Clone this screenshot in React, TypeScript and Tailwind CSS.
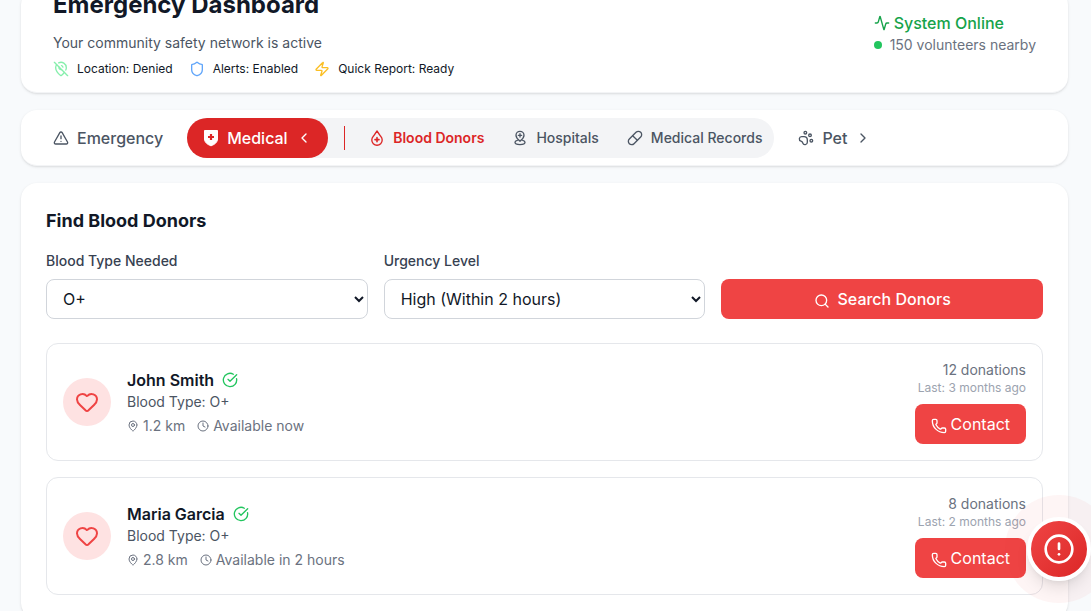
import { Activity, ChevronLeft, ChevronRight, CircleAlert, CircleCheckBig, Clock, Heart, MapPin, MapPinOff, PawPrint, Phone, Pill, Search, Shield, TriangleAlert, Zap } from "lucide-react";

const font = { fontFamily: "Inter, sans-serif" };

function ShieldPlusFilled() {
  return (
    <svg width="16" height="18" viewBox="0 0 16 18" className="shrink-0">
      <path d="M1.500 1.500H14.500V10C14.500 13.300 11.500 15.600 8 16.800C4.500 15.600 1.500 13.300 1.500 10Z" fill="#fff" stroke="#fff" strokeWidth="1" strokeLinejoin="round" />
      <path d="M8 5v6M5 8h6" stroke="#dc2626" strokeWidth="2.200" />
    </svg>
  );
}

function DropPlus() {
  return (
    <svg width="16" height="16" viewBox="0 0 24 24" fill="none" stroke="#dc2626" strokeWidth="2" strokeLinecap="round" strokeLinejoin="round" className="shrink-0">
      <path d="M12 1.500 6.500 9.500a7.800 7.800 0 1 0 11 0z" />
      <path d="M12 11.500v6M9 14.500h6" strokeWidth="2.400" />
    </svg>
  );
}

function HospitalPin() {
  return (
    <svg width="16" height="16" viewBox="0 0 24 24" fill="none" stroke="#4b5563" strokeWidth="2" strokeLinecap="round" strokeLinejoin="round" className="shrink-0">
      <path d="M18 8c0 3.600-3.600 6.800-5.400 8.300a1 1 0 0 1-1.200 0C9.600 14.800 6 11.600 6 8a6 6 0 0 1 12 0" />
      <path d="M12 5.500v5M9.500 8h5" />
      <path d="M8 15.500c-2 .6-3.500 1.600-3.500 3C4.500 20.500 8 22 12 22s7.500-1.500 7.500-3.500c0-1.400-1.500-2.400-3.500-3" />
    </svg>
  );
}

function Donor({ name, km, avail, count, last }: { name: string; km: string; avail: string; count: string; last: string }) {
  return (
    <div className="flex h-[118px] items-center justify-between rounded-xl border border-[#e5e7eb] bg-white px-4">
      <div className="flex items-center gap-4">
        <div className="flex h-12 w-12 items-center justify-center rounded-full bg-[#fee2e2]">
          <Heart size={24} className="text-[#ef4444]" />
        </div>
        <div>
          <div className="flex items-center gap-2">
            <span className="text-base font-semibold leading-6 text-[#111827]">{name}</span>
            <CircleCheckBig size={16} className="text-[#22c55e]" />
          </div>
          <div className="text-sm leading-5 text-[#4b5563]">Blood Type: O+</div>
          <div className="mt-1 flex items-center gap-3 text-sm leading-5 text-[#6b7280]">
            <span className="flex items-center gap-1"><MapPin size={12} />{km}</span>
            <span className="flex items-center gap-1"><Clock size={12} />{avail}</span>
          </div>
        </div>
      </div>
      <div className="text-right">
        <div className="text-sm leading-5 text-[#6b7280]">{count}</div>
        <div className="text-xs leading-4 text-[#9ca3af]">{last}</div>
        <button className="mt-2 inline-flex h-10 items-center gap-1 rounded-lg bg-[#ef4444] px-4 text-base text-white">
          <Phone size={16} className="mt-1" />Contact
        </button>
      </div>
    </div>
  );
}

export default function App() {
  return (
    <div style={font} className="relative h-[611px] w-[1091px] overflow-hidden bg-[#f8fafc] pl-[21px] pr-[23px]">
      <div className="-mt-[11px] flex h-[104px] justify-between rounded-2xl border-b border-[#f3f4f6] bg-white px-8 shadow-sm">
        <div>
          <h1 className="text-2xl font-bold leading-8 text-[#111827]">Emergency Dashboard</h1>
          <p className="mt-[12px] text-sm leading-5 text-[#4b5563]">Your community safety network is active</p>
          <div className="mt-[8px] flex items-center gap-4 text-xs leading-4 text-[#111827]">
            <span className="flex items-center gap-2"><MapPinOff size={16} className="text-[#86efac]" />Location: Denied</span>
            <span className="flex items-center gap-2"><Shield size={16} className="text-[#60a5fa]" />Alerts: Enabled</span>
            <span className="flex items-center gap-2"><Zap size={16} className="text-[#fbbf24]" />Quick Report: Ready</span>
          </div>
        </div>
        <div className="pt-[22px]">
          <div className="flex items-center gap-1 text-base font-medium leading-6 text-[#16a34a]"><Activity size={16} />System Online</div>
          <div className="flex items-center gap-2 text-sm leading-5 text-[#6b7280]"><span className="h-2 w-2 rounded-full bg-[#22c55e]" />150 volunteers nearby</div>
        </div>
      </div>

      <div className="mt-[17px] flex h-14 items-center rounded-2xl border-b border-[#f3f4f6] bg-white px-4 shadow-sm">
        <button className="flex h-10 items-center gap-2 px-4 text-base font-medium text-[#4b5563]"><TriangleAlert size={16} />Emergency</button>
        <div className="ml-2 flex h-10 items-center rounded-full bg-[#f3f4f6]">
          <button className="flex h-10 w-[141px] items-center gap-2 rounded-full bg-[#dc2626] px-4 text-base font-medium text-white"><ShieldPlusFilled />Medical<ChevronLeft size={16} /></button>
          <span className="ml-4 h-6 w-px bg-[#dc2626]" />
          <div className="ml-3 flex items-center gap-1 text-sm">
            <button className="flex items-center gap-2 px-3 font-semibold text-[#dc2626]"><DropPlus />Blood Donors</button>
            <button className="flex items-center gap-2 px-3 font-medium text-[#4b5563]"><HospitalPin />Hospitals</button>
            <button className="flex items-center gap-2 px-3 font-medium text-[#4b5563]"><Pill size={16} />Medical Records</button>
          </div>
        </div>
        <button className="ml-2 flex h-10 items-center gap-2 px-4 text-base font-medium text-[#4b5563]"><PawPrint size={16} />Pet<ChevronRight size={16} /></button>
      </div>

      <div className="mt-[17px] rounded-2xl bg-white px-[25px] pt-6 shadow-sm">
        <h2 className="text-lg font-bold leading-7 text-[#111827]">Find Blood Donors</h2>
        <div className="mt-4 grid grid-cols-3 items-end gap-4">
          <label className="block text-sm font-medium leading-5 text-[#374151]">Blood Type Needed
            <select className="mt-2 block h-10 w-full rounded-lg border border-[#d1d5db] bg-white px-3 text-base font-normal text-[#111827]"><option>O+</option></select>
          </label>
          <label className="block text-sm font-medium leading-5 text-[#374151]">Urgency Level
            <select className="mt-2 block h-10 w-full rounded-lg border border-[#d1d5db] bg-white px-3 text-base font-normal text-[#111827]"><option>High (Within 2 hours)</option></select>
          </label>
          <button className="flex h-10 items-center justify-center gap-2 rounded-lg bg-[#ef4444] text-base font-medium text-white"><Search size={16} className="mt-1" />Search Donors</button>
        </div>
        <div className="mt-6 flex flex-col gap-4 pb-6">
          <Donor name="John Smith" km="1.2 km" avail="Available now" count="12 donations" last="Last: 3 months ago" />
          <Donor name="Maria Garcia" km="2.8 km" avail="Available in 2 hours" count="8 donations" last="Last: 2 months ago" />
        </div>
      </div>

      <div className="absolute left-[1005px] top-[495px] flex h-[108px] w-[108px] items-center justify-center rounded-full bg-[#ef4444]/5">
        <button className="flex h-16 w-16 items-center justify-center rounded-full border-4 border-white bg-gradient-to-br from-[#ef4444] to-[#dc2626] text-white shadow-lg">
          <CircleAlert size={32} />
        </button>
      </div>
    </div>
  );
}
